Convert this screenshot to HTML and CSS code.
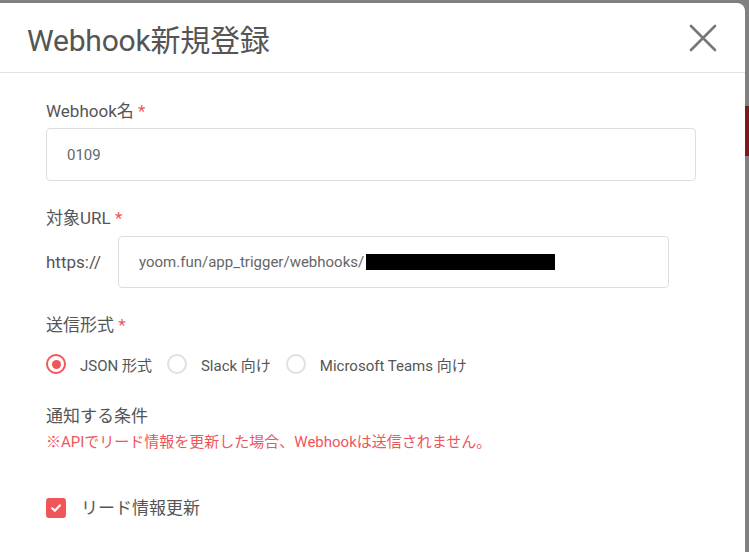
FILE: index.html
```html
<!DOCTYPE html>
<html lang="ja">
<head>
    <meta charset="UTF-8">
    <meta name="viewport" content="width=device-width, initial-scale=1.0">
    <title>Webhook新規登録</title>
    <link rel="stylesheet" href="styles.css">
</head>
<body>
    <div class="modal">
        <div class="modal-header">
            <h1 class="modal-title">Webhook新規登録</h1>
            <button class="close-btn" aria-label="閉じる">
                <svg width="28" height="28" viewBox="0 0 28 28">
                    <path d="M2 2 L26 26 M26 2 L2 26" stroke="#777" stroke-width="2.6" fill="none" stroke-linecap="round"/>
                </svg>
            </button>
        </div>

        <div class="modal-body">
            <div class="field">
                <label class="field-label">Webhook名 <span class="required">*</span></label>
                <div class="text-input name-input">0109</div>
            </div>

            <div class="field">
                <label class="field-label">対象URL <span class="required">*</span></label>
                <div class="url-row">
                    <span class="url-prefix">https://</span>
                    <div class="text-input url-input">yoom.fun/app_trigger/webhooks/<span class="redacted"></span></div>
                </div>
            </div>

            <div class="field">
                <label class="field-label">送信形式 <span class="required">*</span></label>
                <div class="radio-group">
                    <label class="radio checked"><span class="radio-mark"></span>JSON 形式</label>
                    <label class="radio"><span class="radio-mark"></span>Slack 向け</label>
                    <label class="radio"><span class="radio-mark"></span>Microsoft Teams 向け</label>
                </div>
            </div>

            <div class="field conditions">
                <label class="field-label">通知する条件</label>
                <p class="notice">※APIでリード情報を更新した場合、Webhookは送信されません。</p>
            </div>

            <label class="checkbox">
                <span class="checkbox-mark">
                    <svg width="12" height="12" viewBox="0 0 12 12">
                        <path d="M2.2 6.3 L4.8 8.8 L9.8 3.4" stroke="#fff" stroke-width="2.2" fill="none" stroke-linecap="round" stroke-linejoin="round"/>
                    </svg>
                </span>
                リード情報更新
            </label>
        </div>
    </div>

    <div class="backdrop-edge">
        <div class="backdrop-accent"></div>
    </div>
</body>
</html>
```

FILE: styles.css
```css
* {
    margin: 0;
    padding: 0;
    box-sizing: border-box;
}

body {
    font-family: Roboto, "Noto Sans CJK JP", sans-serif;
    background: #808080;
    color: #555;
    display: flex;
    align-items: flex-start;
    height: 552px;
    overflow: hidden;
}

.modal {
    width: 745px;
    height: 549px;
    margin-top: 3px;
    background: #fff;
    border-top-right-radius: 8px;
}

.modal-header {
    height: 70px;
    display: flex;
    align-items: center;
    justify-content: space-between;
    padding: 0 28px 0 27px;
    border-bottom: 1px solid #e3e3e3;
}

.modal-title {
    font-size: 30px;
    font-weight: 400;
    color: #555;
    letter-spacing: -0.2px;
}

.close-btn {
    border: none;
    background: none;
    display: flex;
    cursor: pointer;
    margin-top: 1px;
}

.modal-body {
    padding: 26px 0 0 46px;
}

.field {
    margin-bottom: 25px;
}

.field-label {
    display: block;
    font-size: 17px;
    line-height: 24px;
    margin-bottom: 5px;
    color: #555;
}

.required {
    color: #f0555a;
}

.text-input {
    height: 53px;
    border: 1px solid #dedede;
    border-radius: 4px;
    padding: 0 20px;
    display: flex;
    align-items: center;
    font-size: 15px;
    color: #666;
}

.name-input {
    width: 650px;
}

.url-row {
    display: flex;
    align-items: center;
    margin-top: 6px;
}

.url-prefix {
    width: 72px;
    font-size: 17px;
    color: #555;
}

.url-input {
    width: 551px;
    height: 52px;
}

.redacted {
    display: inline-block;
    width: 189px;
    height: 16px;
    background: #000;
    margin-left: 2px;
}

.radio-group {
    display: flex;
    gap: 15px;
    margin-top: 15px;
    height: 24px;
    align-items: center;
}

.radio {
    display: flex;
    align-items: center;
    gap: 14px;
    font-size: 15px;
    color: #555;
}

.radio-mark {
    width: 20px;
    height: 20px;
    border-radius: 50%;
    border: 2px solid #e0e0e0;
    display: flex;
    align-items: center;
    justify-content: center;
}

.radio.checked .radio-mark {
    border: 2.5px solid #f0555a;
}

.radio.checked .radio-mark::after {
    content: "";
    width: 9px;
    height: 9px;
    border-radius: 50%;
    background: #f0555a;
}

.conditions {
    margin-top: 28px;
    margin-bottom: 0;
}

.conditions .field-label {
    margin-bottom: 4px;
}

.notice {
    font-size: 15px;
    line-height: 20px;
    color: #f0555a;
}

.checkbox {
    display: flex;
    align-items: center;
    gap: 15px;
    font-size: 17px;
    line-height: 24px;
    margin-top: 44px;
    color: #555;
}

.checkbox-mark {
    width: 20px;
    height: 20px;
    border-radius: 3px;
    background: #f0555a;
    display: flex;
    align-items: center;
    justify-content: center;
}

.backdrop-edge {
    width: 4px;
    padding-top: 106px;
}

.backdrop-accent {
    height: 50px;
    background: #7a1a1c;
}
```
